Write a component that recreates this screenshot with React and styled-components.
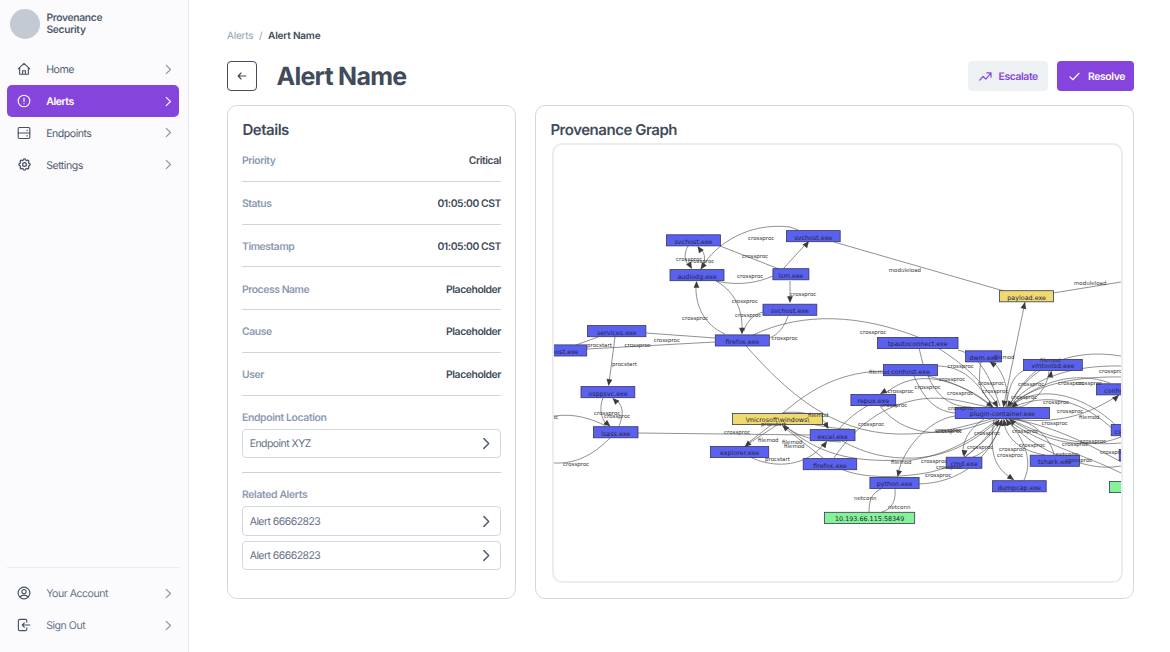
import React from "react";
import styled, { createGlobalStyle, css } from "styled-components";
import { HiOutlineCog } from "react-icons/hi";

const GlobalStyle = createGlobalStyle`
  * { box-sizing: border-box; }
  body { margin: 0; background: #fff; color: #414b5a; font-family: Inter, sans-serif; text-rendering: geometricPrecision; }
  button { font: inherit; margin: 0; text-rendering: inherit; }
`;

const Page = styled.div`
  display: flex;
  height: 652px;
  overflow: hidden;
`;

const Sidebar = styled.aside`
  display: flex;
  flex-direction: column;
  width: 189px;
  padding: 8.5px 9px 11px 7px;
  background: #fbfbfd;
  border-right: 1px solid #e6e9ef;
`;

const Brand = styled.div`
  display: flex;
  align-items: center;
  gap: 7px;
  height: 30px;
  margin: 0 0 15px 2.5px;
  font-size: 10.3px;
  line-height: 12px;
  font-weight: 600;
  letter-spacing: -0.35px;
  color: #515c6d;
`;

const Avatar = styled.span`
  width: 30px;
  height: 30px;
  border-radius: 50%;
  background: #c4cad4;
`;

const NavItem = styled.a`
  display: flex;
  align-items: center;
  height: 31.75px;
  padding: 0 4.5px 0 10px;
  border-radius: 5px;
  font-size: 10.6px;
  letter-spacing: -0.5px;
  color: ${(p) => (p.$muted ? "#68748a" : "#535e6f")};
  svg:first-child { color: #465164; }
  svg:last-child { color: #8793aa; }
  ${(p) =>
    p.$active &&
    css`
      background: #8545dc;
      color: #fff;
      font-weight: 600;
      svg:first-child, svg:last-child { color: #fff; }
    `}
`;

const NavLabel = styled.span`
  flex: 1;
  margin-left: 15.2px;
  padding-top: 1px;
`;

const NavFooter = styled.div`
  margin-top: auto;
  padding-top: 9.5px;
  border-top: 1px solid #e8ebf1;
`;

const Main = styled.main`
  flex: 1;
  min-width: 0;
  padding: 29px 36px 0 38px;
`;

const Crumbs = styled.nav`
  display: flex;
  gap: 5.7px;
  height: 15px;
  font-size: 10px;
  line-height: 15px;
  letter-spacing: -0.2px;
  color: #929db3;
  b { font-weight: 600; color: #414b5a; }
`;

const Header = styled.header`
  display: flex;
  align-items: center;
  height: 30px;
  margin: 17px 0 14px;
`;

const BackButton = styled.button`
  display: grid;
  place-items: center;
  width: 30px;
  height: 30px;
  padding: 0;
  background: #fff;
  border: 1.5px solid #414b5a;
  border-radius: 4px;
  color: #414b5a;
`;

const Title = styled.h1`
  flex: 1;
  margin: 0 0 0 19.5px;
  padding-top: 2px;
  font-size: 25px;
  line-height: 30px;
  font-weight: 700;
  letter-spacing: -0.75px;
`;

const Action = styled.button`
  display: flex;
  align-items: center;
  gap: 7px;
  height: 29.5px;
  width: ${(p) => p.$width}px;
  margin-left: 9.5px;
  padding: 0 0 0 11px;
  border: 0;
  border-radius: 4px;
  font-size: 10.4px;
  font-weight: 600;
  letter-spacing: -0.4px;
  color: ${(p) => (p.$primary ? "#fff" : "#8545dc")};
  background: ${(p) => (p.$primary ? "#8545dc" : "#edf1f4")};
`;

const Columns = styled.div`
  display: grid;
  grid-template-columns: 289px 1fr;
  gap: 19px;
  height: 494px;
`;

const Card = styled.section`
  min-width: 0;
  padding: 14px;
  border: 1px solid #d1d6df;
  border-radius: 10px;
`;

const CardTitle = styled.h2`
  margin: 0;
  padding-left: 0.4px;
  font-size: 15px;
  line-height: 19px;
  font-weight: 600;
  letter-spacing: -0.47px;
`;

const DetailRow = styled.div`
  display: flex;
  align-items: center;
  justify-content: space-between;
  height: 42.8px;
  padding-top: 1.8px;
  border-bottom: 1px solid #cfd5de;
  font-size: 10.4px;
  font-weight: 600;
  letter-spacing: -0.44px;
  color: #414b5a;
`;

const Muted = styled.span`
  color: #8d99b1;
`;

const LinkGroup = styled.div`
  padding: 14.2px 0 14px;
  border-bottom: ${(p) => (p.$last ? "0" : "1px solid #cbd3df")};
`;

const GroupLabel = styled.div`
  height: 19px;
  font-size: 10.4px;
  line-height: 15px;
  font-weight: 600;
  letter-spacing: -0.36px;
  color: #8d99b1;
`;

const LinkBox = styled.a`
  display: flex;
  align-items: center;
  justify-content: space-between;
  height: 29.3px;
  margin-bottom: ${(p) => (p.$spaced ? "5px" : "0")};
  padding: 0 6px 0 6.7px;
  border: 1px solid #d1d8e3;
  border-radius: 4px;
  font-size: 10.5px;
  letter-spacing: -0.55px;
  color: #667186;
  svg { color: #536077; }
`;

const GraphFrame = styled.div`
  height: 440px;
  margin: 4px -4px 0 2px;
  border: 2px solid #ececee;
  border-radius: 10px;
  overflow: hidden;
  svg { display: block; width: 100%; height: 100%; }
`;

const NodeText = styled.text`
  font: 6.4px "DejaVu Sans", sans-serif;
  fill: #23243f;
  text-anchor: middle;
`;

const EdgeText = styled.text`
  font: 5.5px "DejaVu Sans", sans-serif;
  fill: #333;
`;

const Stroke = ({ size = 14, width = 1.6, children }) => (
  <svg width={size} height={size} viewBox="0 0 20 20" fill="none" stroke="currentColor" strokeWidth={width} strokeLinecap="round" strokeLinejoin="round">
    {children}
  </svg>
);

const Chevron = ({ width = 1.7, size = 13 }) => (
  <Stroke size={size} width={width}><path d="M6.5 3.5 13 10 6.5 16.5" /></Stroke>
);

const HomeIcon = () => (
  <Stroke><path d="M1.8 9.8 10 2l8.2 7.8M3.8 8.2v9.3h12.4V8.2M8 17.3v-4.8h4v4.8" /></Stroke>
);
const AlertIcon = () => (
  <Stroke><circle cx="10" cy="10" r="8.3" /><path d="M10 5.7v5M10 13.8v.2" /></Stroke>
);
const ServerIcon = () => (
  <Stroke><rect x="1.7" y="2.2" width="16.6" height="15.6" rx="1.8" /><path d="M1.7 10h16.6M14.5 5.8v.8M14.5 13.6v.8" /></Stroke>
);
const UserIcon = () => (
  <Stroke><circle cx="10" cy="10" r="8.4" /><circle cx="10" cy="8" r="3" /><path d="M4.2 15.5c1.5-1.8 3.6-2.5 5.8-2.5s4.3.7 5.8 2.5" /></Stroke>
);
const SignOutIcon = () => (
  <Stroke><path d="M14 6V4a2 2 0 0 0-2-2H4a2 2 0 0 0-2 2v12a2 2 0 0 0 2 2h8a2 2 0 0 0 2-2v-2M18.5 10H7.5M10.5 7l-3 3 3 3" /></Stroke>
);

const BLUE = "#5a61ee";
const YELLOW = "#f0d96f";
const GREEN = "#86f296";

const nodes = [
  [666.4, 234.8, 54, "svchost.exe"], [670, 269.6, 54, "audiodg.exe"],
  [587.5, 325.6, 58.4, "services.exe"], [532.6, 344.9, 54.1, "svchost.exe"],
  [715.3, 334.9, 54, "firefox.exe"], [786.4, 230.6, 53.8, "svchost.exe"],
  [772.9, 268.7, 36, "lsm.exe"], [763, 304.2, 53.8, "svchost.exe"],
  [877.5, 337.5, 80.5, "tpautoconnect.exe"], [883.5, 364.6, 54.1, "conhost.exe"],
  [965.6, 350.8, 36, "dwm.exe"], [850.9, 394.5, 44.8, "repux.exe"],
  [955.2, 407.5, 94.4, "plugin-container.exe"], [999.6, 290.7, 54, "payload.exe", YELLOW],
  [1023.6, 359.4, 58.7, "vmtoolsd.exe"], [1096.6, 383.8, 54, "conhost.exe"],
  [581, 386.6, 53.8, "osppsvc.exe"], [593.5, 426.7, 44.5, "lsass.exe"],
  [732.6, 413.5, 90, "\\microsoft\\windows\\", YELLOW], [810.2, 429.6, 44.8, "excel.exe"],
  [710.4, 446.5, 58.3, "explorer.exe"], [803.2, 458.6, 53.5, "firefox.exe"],
  [869.9, 477.5, 49.2, "python.exe"], [824.6, 512.3, 90.1, "10.193.66.115:58349", GREEN],
  [946.2, 457.2, 35.7, "cmd.exe"], [1030.2, 455.2, 49.2, "tshark.exe"],
  [992.6, 480.7, 53.6, "dumpcap.exe"], [1111.2, 424.6, 36, "csrss.exe"],
  [1119.2, 449.5, 54, "svchost.exe"], [1109.6, 481.5, 90, "", GREEN],
];

const edges = [
  "M688 246C684 253 684 260 689 266", "M701 269C706 262 706 254 700 248",
  "M702 267C716 244 748 222 790 227L798 230",
  "M720 246L779 269",
  "M784 268L804 246", "M834 242L1004 291", "M1053 293L1121 282",
  "M716 281C738 286 757 283 773 276", "M790 281L790 300",
  "M716 281C732 290 743 306 742 331", "M725 334C704 325 695 305 696 285",
  "M763 312C752 315 746 323 744 331", "M788 316C785 325 779 335 769 338",
  "M646 333L715 338", "M587 349L715 342", "M598 337L576 345", "M615 337L609 383",
  "M554 416C575 413 592 419 606 426", "M603 398C599 408 601 417 606 424",
  "M619 426C624 414 623 406 617 401", "M610 438C594 454 577 464 554 463",
  "M638 433L810 435", "M746 346C787 392 831 432 896 434C940 435 969 425 995 418",
  "M753 335C804 311 861 315 918 337",
  "M783 413C815 385 845 372 883 371", "M777 425L748 444",
  "M771 425L748 443", "M750 457C777 470 807 465 823 445",
  "M823 458L785 428", "M834 458C854 428 880 408 911 401C944 393 967 404 995 408",
  "M838 430C852 414 866 405 883 399", "M784 425C800 440 825 441 841 442",
  "M784 425C824 459 859 462 912 460C951 454 975 437 997 420",
  "M811 424C831 428 841 429 850 429", "M782 413C803 410 824 416 827 426",
  "M842 441C866 454 887 459 916 458C955 455 977 438 998 421",
  "M841 469C863 479 901 478 931 472C961 465 981 447 999 420",
  "M869 512C869 502 871 493 881 489", "M895 489C896 499 893 509 882 512",
  "M919 348L923 364", "M938 348C962 363 980 379 997 404",
  "M958 350C979 355 989 374 1000 406", "M937 366C963 366 978 382 993 407",
  "M928 376C942 380 969 386 993 407", "M914 376C922 394 932 411 955 413",
  "M928 376C937 397 951 407 971 407", "M887 392C917 368 957 378 992 407",
  "M880 406C899 430 928 437 960 430C979 426 989 421 999 419",
  "M981 362C976 389 984 396 997 407", "M1006 407C1010 388 1002 370 993 362",
  "M1025 302L1004 404", "M1025 370C1010 376 1008 395 1006 407",
  "M1037 370C1021 383 1015 395 1009 407", "M1049 371C1048 391 1026 410 1014 407",
  "M1121 356C1067 347 1028 369 1009 406", "M1121 366C1070 365 1030 379 1009 407",
  "M1121 377C1071 376 1030 387 1010 406", "M1110 383C1074 370 1038 382 1010 407",
  "M1119 395C1097 408 1069 426 1013 419",
  "M1121 431C1096 402 1044 378 1010 407", "M1121 437C1091 406 1056 389 1013 407",
  "M955 416C928 420 903 449 898 474", "M984 419C966 431 962 445 963 455",
  "M965 457C978 446 993 435 1001 421", "M973 457C992 450 998 432 1002 421",
  "M918 484C958 483 988 462 1002 421", "M994 419C989 453 994 468 1014 480",
  "M1024 480C1035 458 1020 432 1005 419", "M1045 455C1022 451 1006 440 1003 419",
  "M1054 455C1051 438 1030 417 1008 419", "M1121 443C1076 447 1040 434 1010 419",
  "M1121 437C1080 453 1040 438 1009 419", "M1121 462C1087 443 1048 424 1010 419",
  "M1121 466C1100 470 1079 464 1055 454C1038 447 1019 433 1006 419",
  "M1121 473C1083 454 1042 445 1006 419",
];

const arrows = [
  [692, 269, 60], [700.5, 269.5, 125], [697.5, 246, 235], [809, 241, -52], [790, 303, 90],
  [742, 334.5, 90], [696.5, 281, -90], [608.5, 386, 98], [610.5, 426.5, 40], [612.5, 398, 225],
  [744.5, 447, 140], [828.5, 429, 60], [827, 441, -55], [782, 425, 220], [897.5, 477, 105],
  [964, 457, 95], [1002, 419, -75], [1004, 419, -95], [999.5, 419.5, -55], [1014, 480, 35],
  [1025, 302, -76], [1003.5, 407.5, 98], [1051.5, 370.5, -80], [1119, 395, -42], [1007, 407.5, 125],
  [998, 407.5, 60], [993, 407.5, 40], [989.5, 361.5, 215], [880, 394, 150], [1011, 407.5, 145],
  [1009, 419, -140], [1006, 419, -120],
];

const labels = [
  ["crossproc", 676, 261], ["crossproc", 688, 262.5], ["crossproc", 748, 240],
  ["crossproc", 742, 258], ["crossproc", 737, 277.6], ["crossproc", 790, 296.3],
  ["crossproc", 731.7, 303.4], ["crossproc", 735, 316.7], ["crossproc", 682, 320.4],
  ["crossproc", 771.5, 340], ["crossproc", 653.7, 341.7], ["crossproc", 624.5, 346.5],
  ["procstart", 587, 347], ["procstart", 612, 365.5], ["moduleload", 888.7, 272.3],
  ["moduleload", 1074, 284.7], ["crossproc", 594, 415], ["crossproc", 604, 418],
  ["crossproc", 563, 466], ["oc", 552, 419], ["crossproc", 724, 434.3],
  ["filemod", 758, 441.5], ["filemod", 782, 443.7], ["filemod", 784, 448],
  ["procstart", 765, 460.7], ["procstart", 761, 425.5], ["filemod", 808, 416.7],
  ["filemod", 891, 464], ["netconn", 854, 500], ["netconn", 888, 509.3],
  ["crossproc", 860, 334], ["filemod", 869, 373.7], ["crossproc", 947.5, 368],
  ["crossproc", 939, 380.6], ["crossproc", 914.5, 388.8], ["crossproc", 887.5, 392.7],
  ["crossproc", 947, 394.5], ["crossproc", 881, 407], ["crossproc", 948, 409.5],
  ["crossproc", 858, 426], ["crossproc", 935, 431.7], ["crossproc", 936, 433],
  ["filemod", 994, 359.2], ["filemod", 1040, 362.2], ["crossproc", 978, 385.4],
  ["crossproc", 982, 392.5], ["crossproc", 1018, 385.6], ["crossproc", 1011, 399.2],
  ["crossproc", 1058, 384.7], ["crossproc", 1076, 384.7], ["crossproc", 1099, 373.4],
  ["crossproc", 1043, 404.2], ["crossproc", 1057, 413.3], ["filemod", 1079, 419.2],
  ["crossproc", 1041.5, 424.6], ["crossproc", 974, 435], ["crossproc", 1012, 433.3],
  ["crossproc", 967, 449.2], ["crossproc", 999, 450.5], ["crossproc", 997, 457],
  ["crossproc", 1019, 447], ["crossproc", 921, 462.7], ["crossproc", 936, 468.5],
  ["crossproc", 925, 477.3], ["netconn", 1056, 456], ["crossproc", 1066, 462],
  ["crossproc", 1062, 445.7], ["crossproc", 1080, 443.2], ["crossproc", 1100, 453.7],
];

const Graph = () => (
  <svg viewBox="554 145 567 436">
    <g fill="none" stroke="#555" strokeWidth="0.65">
      {edges.map((d, i) => <path key={i} d={d} />)}
    </g>
    {nodes.map(([x, y, w, name, fill = BLUE], i) => (
      <g key={i}>
        <rect x={x} y={y} width={w} height="11.1" fill={fill} stroke="#34365e" strokeWidth="0.8" />
        <NodeText x={x + w / 2} y={y + 8.9}>{name}</NodeText>
      </g>
    ))}
    <g fill="#3b3b3b">
      {arrows.map(([x, y, angle], i) => (
        <path key={i} d="M0 0-6.8-2.9v5.8z" transform={`translate(${x} ${y}) rotate(${angle})`} />
      ))}
    </g>
    {labels.map(([text, x, y], i) => <EdgeText key={i} x={x} y={y}>{text}</EdgeText>)}
  </svg>
);

const NavLink = ({ icon, label, ...rest }) => (
  <NavItem {...rest}>
    {icon}
    <NavLabel>{label}</NavLabel>
    <Chevron />
  </NavItem>
);

const GearIcon = styled(HiOutlineCog)`
  width: 15px;
  height: 15px;
  margin: 0 -0.5px;
`;

const details = [
  ["Priority", "Critical"],
  ["Status", "01:05:00 CST"],
  ["Timestamp", "01:05:00 CST"],
  ["Process Name", "Placeholder"],
  ["Cause", "Placeholder"],
  ["User", "Placeholder"],
];

export default function App() {
  return (
    <>
      <GlobalStyle />
      <Page>
        <Sidebar>
          <Brand><Avatar /><span>Provenance<br />Security</span></Brand>
          <NavLink icon={<HomeIcon />} label="Home" />
          <NavLink icon={<AlertIcon />} label="Alerts" $active />
          <NavLink icon={<ServerIcon />} label="Endpoints" />
          <NavLink icon={<GearIcon />} label="Settings" />
          <NavFooter>
            <NavLink icon={<UserIcon />} label="Your Account" $muted />
            <NavLink icon={<SignOutIcon />} label="Sign Out" $muted />
          </NavFooter>
        </Sidebar>
        <Main>
          <Crumbs><span>Alerts</span><span>/</span><b>Alert Name</b></Crumbs>
          <Header>
            <BackButton aria-label="Back">
              <Stroke size={12} width={1.9}><path d="M16.5 10h-13M8.5 5l-5 5 5 5" /></Stroke>
            </BackButton>
            <Title>Alert Name</Title>
            <Action $width={80}>
              <Stroke size={13} width={1.8}><path d="M1 15.5 6.5 10l4 4L18 5M12 4.5h6.5V11" /></Stroke>
              Escalate
            </Action>
            <Action $width={77} $primary>
              <Stroke size={13} width={1.8}><path d="M3 10.5 7.5 15 17 5" /></Stroke>
              Resolve
            </Action>
          </Header>
          <Columns>
            <Card>
              <CardTitle>Details</CardTitle>
              {details.map(([name, value]) => (
                <DetailRow key={name}><Muted>{name}</Muted><span>{value}</span></DetailRow>
              ))}
              <LinkGroup>
                <GroupLabel>Endpoint Location</GroupLabel>
                <LinkBox>Endpoint XYZ<Chevron size={15} width={2} /></LinkBox>
              </LinkGroup>
              <LinkGroup $last>
                <GroupLabel>Related Alerts</GroupLabel>
                <LinkBox $spaced>Alert 66662823<Chevron size={15} width={2} /></LinkBox>
                <LinkBox>Alert 66662823<Chevron size={15} width={2} /></LinkBox>
              </LinkGroup>
            </Card>
            <Card>
              <CardTitle>Provenance Graph</CardTitle>
              <GraphFrame><Graph /></GraphFrame>
            </Card>
          </Columns>
        </Main>
      </Page>
    </>
  );
}
